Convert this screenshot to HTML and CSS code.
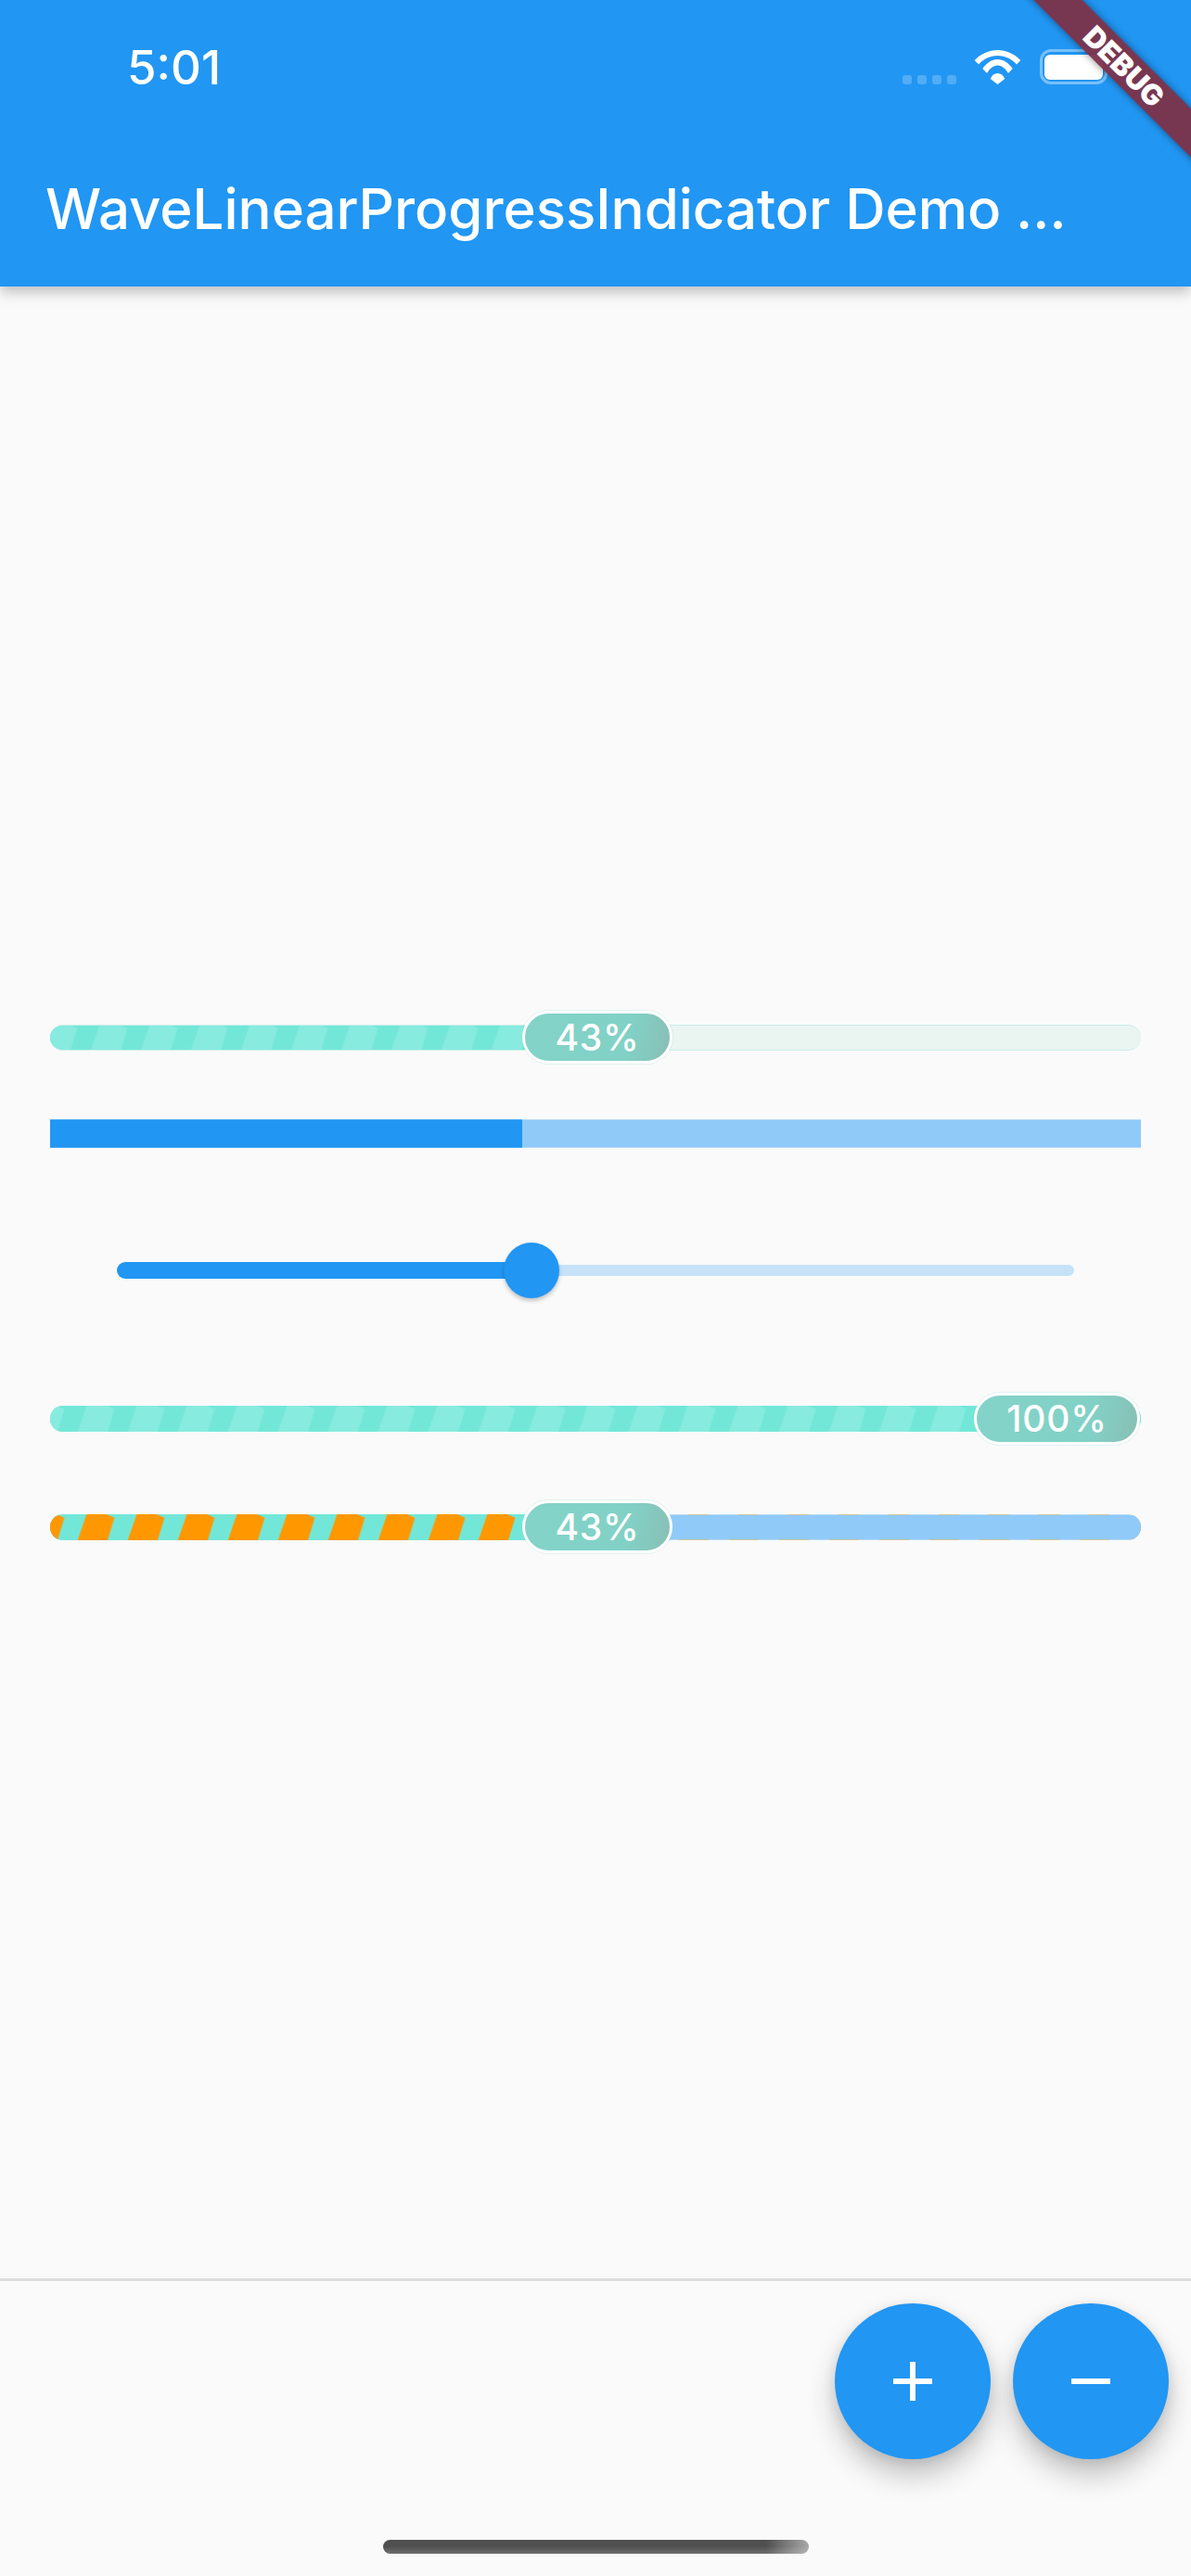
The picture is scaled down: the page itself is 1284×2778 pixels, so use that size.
FILE: index.html
```html
<!doctype html>
<html lang="en">
<head>
    <meta charset="UTF-8">
    <title>WaveLinearProgressIndicator Demo</title>
    <link rel="stylesheet" href="styles.css">
</head>
<body>
    <svg class="defs" width="0" height="0">
        <defs>
            <pattern id="waveA" patternUnits="userSpaceOnUse" x="43.7" y="0" width="54" height="28">
                <polygon points="0,28 9.7,0 31.3,0 39.7,3.7 32.3,28" fill="#87EBDF"/>
            </pattern>
            <pattern id="waveB" patternUnits="userSpaceOnUse" x="29.7" y="0" width="54" height="28">
                <polygon points="0,28 9.7,0 31.3,0 39.7,3.7 32.3,28" fill="#87EBDF"/>
            </pattern>
            <pattern id="waveOrange" patternUnits="userSpaceOnUse" x="29.7" y="0" width="54" height="28">
                <polygon points="0,28 9.7,0 31.3,0 39.7,3.7 32.3,28" fill="#FF9800"/>
            </pattern>
        </defs>
    </svg>

    <header class="appbar">
        <div class="status">
            <span class="clock">5:01</span>
            <div class="status-icons">
                <div class="signal"><i></i><i></i><i></i><i></i></div>
                <svg class="wifi" width="51" height="37" viewBox="0 0 51 37" fill="#fff">
                    <path d="M.7 11C7.5 4 16 0 25.5 0S43.5 4 50.3 11L46 15.5C40.5 9.5 33.5 6 25.5 6S10.5 9.5 5 15.5Z"/>
                    <path d="M9.3 20C13.5 14 19 10 25.5 10S37.5 14 41.7 20L37 25C34 20 30 16.5 25.5 16.5S17 20 14 25Z"/>
                    <path d="M17.7 31C19.5 27 22 25 25.5 25S31.5 27 33.3 31L25.5 37Z"/>
                </svg>
                <div class="battery"><b></b></div>
            </div>
        </div>
        <h1 class="title">WaveLinearProgressIndicator Demo …</h1>
    </header>

    <div class="banner-clip">
        <div class="banner">DEBUG</div>
    </div>

    <main class="content">
        <div class="row row-wave">
            <div class="bar bar-pale">
                <div class="fill" style="width:44%">
                    <svg class="waves"><rect width="100%" height="100%" fill="url(#waveA)"/></svg>
                </div>
            </div>
            <div class="pill" style="left:43.28%">43%</div>
        </div>

        <div class="row row-plain">
            <div class="plain-fill" style="width:43.28%"></div>
        </div>

        <div class="row row-slider">
            <div class="slider-on" style="width:447px"></div>
            <div class="slider-off"></div>
            <div class="thumb" style="left:489px"></div>
        </div>

        <div class="row row-wave row-full">
            <div class="bar">
                <div class="fill" style="width:100%">
                    <svg class="waves"><rect width="100%" height="100%" fill="url(#waveB)"/></svg>
                </div>
            </div>
            <div class="pill pill-end">100%</div>
        </div>

        <div class="row row-wave">
            <div class="bar bar-blue">
                <svg class="waves waves-under"><rect width="100%" height="100%" fill="url(#waveOrange)"/></svg>
                <div class="bar-cover"></div>
                <div class="fill" style="width:44%">
                    <svg class="waves"><rect width="100%" height="100%" fill="url(#waveOrange)"/></svg>
                </div>
            </div>
            <div class="pill" style="left:43.28%">43%</div>
        </div>
    </main>

    <footer class="footer">
        <div class="fabs">
            <button class="fab">
                <svg width="42" height="42" viewBox="0 0 42 42" fill="#fff"><path d="M18 0h6v18h18v6H24v18h-6V24H0v-6h18z"/></svg>
            </button>
            <button class="fab">
                <svg width="42" height="42" viewBox="0 0 42 42" fill="#fff"><path d="M0 18h42v6H0z"/></svg>
            </button>
        </div>
        <div class="home"></div>
    </footer>
</body>
</html>
```

FILE: styles.css
```css
*{
    margin: 0;
    padding: 0;
    box-sizing: border-box;
}
html,body{
    width: 1284px;
    height: 2778px;
    overflow: hidden;
}
body{
    position: relative;
    background: #FAFAFA;
    font-family: Inter, "Noto Sans", sans-serif;
}
.defs{
    position: absolute;
}

/* app bar */
.appbar{
    position: relative;
    z-index: 1;
    height: 309px;
    background: #2196F3;
    color: #fff;
    box-shadow: 0 6px 14px rgba(0,0,0,.24);
}
.status{
    display: flex;
    height: 132px;
    padding: 53px 90px 0 137px;
}
.clock{
    font-size: 51px;
    line-height: 40px;
    font-weight: 500;
}
.status-icons{
    display: flex;
    align-items: flex-end;
    height: 38px;
    margin-left: auto;
}
.signal{
    display: flex;
    gap: 6px;
    margin-right: 19px;
}
.signal i{
    width: 10px;
    height: 10px;
    border-radius: 3px;
    background: rgba(255,255,255,.22);
}
.wifi{
    margin-right: 20px;
}
.battery{
    position: relative;
    display: flex;
    width: 73px;
    height: 38px;
    padding: 3px 2px 2px;
    border: 3px solid rgba(255,255,255,.4);
    border-radius: 12px;
}
.battery b{
    flex: 1;
    background: #fff;
    border-radius: 6px;
}
.battery::after{
    content: '';
    position: absolute;
    top: 8px;
    right: -9px;
    width: 5px;
    height: 13px;
    border-radius: 0 4px 4px 0;
    background: rgba(255,255,255,.4);
}
.title{
    padding: 5px 0 0 49px;
    font-size: 60px;
    line-height: 177px;
    font-weight: 500;
    letter-spacing: -.03px;
    white-space: nowrap;
}

/* flutter debug ribbon */
.banner-clip{
    position: absolute;
    z-index: 2;
    left: 1084px;
    top: 0;
    width: 200px;
    height: 200px;
    overflow: hidden;
}
.banner{
    position: absolute;
    left: -72px;
    top: 53px;
    width: 400px;
    height: 37px;
    transform: rotate(45deg);
    background: rgba(125,50,72,.95);
    box-shadow: 0 0 9px rgba(0,0,0,.45);
    color: #fff;
    font-size: 31px;
    font-weight: 900;
    line-height: 37px;
    text-align: center;
}

/* progress rows */
.content{
    display: flex;
    flex-direction: column;
    gap: 60px;
    height: 2148px;
    padding: 781px 54px 0;
}
.row{
    position: relative;
}
.row-wave{
    height: 57px;
    padding-top: 15px;
}
.row-full{
    height: 56px;
    padding-top: 14px;
}
.bar{
    position: relative;
    height: 28px;
    border-radius: 14px;
    overflow: hidden;
    background: #72E7D8;
}
.bar-pale{
    background: #EAF4F1;
    border-top: 1px solid #CBEEE9;
    border-bottom: 1px solid #CBEEE9;
}
.bar-blue{
    background: #B5DDF8;
}
.fill{
    position: absolute;
    left: 0;
    top: 0;
    height: 28px;
    overflow: hidden;
    background: #72E7D8;
}
.bar-pale .fill{
    top: -1px;
}
.waves{
    display: block;
    position: absolute;
    left: 0;
    top: 0;
    width: 1176px;
    height: 28px;
}
.waves-under{
    opacity: .35;
}
.bar-cover{
    position: absolute;
    left: 0;
    right: 0;
    top: 1px;
    bottom: 1px;
    background: #90CAF9;
}
.pill{
    position: absolute;
    top: 0;
    width: 162px;
    height: 57px;
    border: 3px solid #fff;
    border-radius: 29px;
    background: linear-gradient(100deg, #83D3C8 0%, #82D1C6 70%, #88BFB5 100%);
    box-shadow: 0 0 0 1px rgba(130,210,200,.2);
    color: #fff;
    font-size: 39px;
    font-weight: 500;
    line-height: 51px;
    text-align: center;
    letter-spacing: .8px;
}
.pill-end{
    right: 1px;
    width: 179px;
    height: 56px;
    line-height: 50px;
}
.row-plain{
    display: block;
    height: 31px;
    background: #90CAF9;
    border-top: 1px solid #B4DAF9;
    border-bottom: 1px solid #B4DAF9;
}
.plain-fill{
    height: 31px;
    margin-top: -1px;
    background: #2196F3;
    border-top: 1px solid #4DABF5;
    border-bottom: 1px solid #4DABF5;
}

/* slider */
.row-slider{
    display: flex;
    align-items: center;
    height: 144px;
    padding: 0 72px;
}
.slider-on{
    height: 18px;
    border-radius: 9px 0 0 9px;
    background: #2196F3;
}
.slider-off{
    flex: 1;
    height: 12px;
    border-radius: 0 6px 6px 0;
    background: #C6E2F8;
}
.thumb{
    position: absolute;
    top: 42px;
    width: 60px;
    height: 60px;
    border-radius: 50%;
    background: #2196F3;
    box-shadow: 0 3px 4px rgba(0,0,0,.22);
}

/* bottom */
.footer{
    height: 321px;
    border-top: 3px solid #DDDDDD;
    padding-top: 24px;
}
.fabs{
    display: flex;
    justify-content: flex-end;
    gap: 24px;
    padding-right: 24px;
}
.fab{
    display: flex;
    align-items: center;
    justify-content: center;
    width: 168px;
    height: 168px;
    border: 0;
    border-radius: 50%;
    background: #2196F3;
    box-shadow: 0 18px 30px rgba(0,0,0,.22), 0 3px 14px rgba(0,0,0,.1);
}
.home{
    width: 459px;
    height: 15px;
    margin: 87px auto 0;
    border-radius: 8px;
    background: linear-gradient(180deg, rgba(255,255,255,0) 45%, rgba(255,255,255,.18)), linear-gradient(90deg, #4F4F4F 90%, #A8A8A8 100%);
}
```
